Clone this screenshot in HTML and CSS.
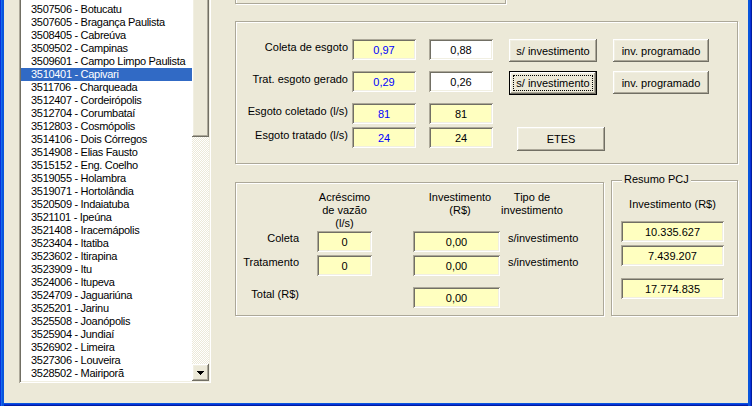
FILE: index.html
```html
<!DOCTYPE html>
<html lang="pt-BR">
<head>
<meta charset="utf-8">
<title>Resumo PCJ</title>
<link rel="stylesheet" href="styles.css">
</head>
<body>
<div class="frame">
  <div class="listbox sunken">
    <div class="items">
      <div class="item">3507100 - Bom Jesus dos Perdões</div>
      <div class="item">3507506 - Botucatu</div>
      <div class="item">3507605 - Bragança Paulista</div>
      <div class="item">3508405 - Cabreúva</div>
      <div class="item">3509502 - Campinas</div>
      <div class="item">3509601 - Campo Limpo Paulista</div>
      <div class="item sel">3510401 - Capivari</div>
      <div class="item">3511706 - Charqueada</div>
      <div class="item">3512407 - Cordeirópolis</div>
      <div class="item">3512704 - Corumbataí</div>
      <div class="item">3512803 - Cosmópolis</div>
      <div class="item">3514106 - Dois Córregos</div>
      <div class="item">3514908 - Elias Fausto</div>
      <div class="item">3515152 - Eng. Coelho</div>
      <div class="item">3519055 - Holambra</div>
      <div class="item">3519071 - Hortolândia</div>
      <div class="item">3520509 - Indaiatuba</div>
      <div class="item">3521101 - Ipeúna</div>
      <div class="item">3521408 - Iracemápolis</div>
      <div class="item">3523404 - Itatiba</div>
      <div class="item">3523602 - Itirapina</div>
      <div class="item">3523909 - Itu</div>
      <div class="item">3524006 - Itupeva</div>
      <div class="item">3524709 - Jaguariúna</div>
      <div class="item">3525201 - Jarinu</div>
      <div class="item">3525508 - Joanópolis</div>
      <div class="item">3525904 - Jundiaí</div>
      <div class="item">3526902 - Limeira</div>
      <div class="item">3527306 - Louveira</div>
      <div class="item">3528502 - Mairiporã</div>
    </div>
    <div class="vscroll">
      <div class="thumb raised"></div>
      <div class="track"></div>
      <div class="sbtn raised">
        <svg class="arrow" width="7" height="4" viewBox="0 0 7 4"><path d="M0 0h7v1h-1v1h-1v1h-1v1h-1v-1h-1v-1h-1v-1h-1z" fill="#000"/></svg>
      </div>
    </div>
  </div>

  <div class="right">
    <div class="group gtop"></div>

    <div class="group g2">
      <div class="lbl r1">Coleta de esgoto</div>
      <div class="tb blue c2 r1">0,97</div>
      <div class="tb white c4 r1">0,88</div>
      <div class="btn raised c6 r1">s/ investimento</div>
      <div class="btn raised c8 r1">inv. programado</div>

      <div class="lbl r2">Trat. esgoto gerado</div>
      <div class="tb blue c2 r2">0,29</div>
      <div class="tb white c4 r2">0,26</div>
      <div class="btn default c6 r2"><span class="focus">s/ investimento</span></div>
      <div class="btn raised c8 r2">inv. programado</div>

      <div class="lbl r3">Esgoto coletado (l/s)</div>
      <div class="tb blue c2 r3">81</div>
      <div class="tb c4 r3">81</div>

      <div class="lbl r4">Esgoto tratado (l/s)</div>
      <div class="tb blue c2 r4">24</div>
      <div class="tb c4 r4">24</div>
      <div class="btn raised etes r4">ETES</div>
    </div>

    <div class="bottomrow">
      <div class="group g3">
        <div class="hdr h2">Acréscimo<br>de vazão<br>(l/s)</div>
        <div class="hdr h4">Investimento<br>(R$)</div>
        <div class="hdr h5">Tipo de<br>investimento</div>

        <div class="lbl3 q2">Coleta</div>
        <div class="tb q2 k2">0</div>
        <div class="tb q2 k4">0,00</div>
        <div class="tipo q2">s/investimento</div>

        <div class="lbl3 q3">Tratamento</div>
        <div class="tb q3 k2">0</div>
        <div class="tb q3 k4">0,00</div>
        <div class="tipo q3">s/investimento</div>

        <div class="lbl3 q4">Total (R$)</div>
        <div class="tb q4 k4">0,00</div>
      </div>

      <div class="group resumo">
        <span class="legend">Resumo PCJ</span>
        <div class="rlabel">Investimento (R$)</div>
        <div class="tb rbox rb1">10.335.627</div>
        <div class="tb rbox rb2">7.439.207</div>
        <div class="tb rbox rb3">17.774.835</div>
      </div>
    </div>
  </div>
</div>
</body>
</html>
```
FILE: styles.css
```css
* { box-sizing: border-box; }
html, body { margin: 0; padding: 0; }
body {
  width: 752px;
  height: 406px;
  overflow: hidden;
  background: #ECE9D8;
  font-family: "Liberation Sans", Arial, sans-serif;
  font-size: 11px;
  color: #000;
}

.frame {
  display: flex;
  align-items: flex-start;
  width: 752px;
  height: 406px;
  padding: 0 4px 3px 4px;
  overflow: hidden;
  background: #ECE9D8;
  box-shadow:
    inset 1px 0 #0831D9,
    inset 2px 0 #166AEE,
    inset 4px 0 #0855DD,
    inset -1px 0 #001EA0,
    inset -2px 0 #0831D9,
    inset -4px 0 #0855DD,
    inset 0 -1px #001EA0,
    inset 0 -2px #0831D9,
    inset 0 -3px #0855DD;
}

/* bevels */
.raised {
  background: #ECE9D8;
  box-shadow:
    inset -1px -1px #716F64,
    inset 1px 1px #FFFFFF,
    inset -2px -2px #ACA899,
    inset 2px 2px #F1EFE2;
}
.sunken {
  box-shadow:
    inset 1px 1px #ACA899,
    inset -1px -1px #FFFFFF,
    inset 2px 2px #716F64,
    inset -2px -2px #F1EFE2;
}

/* list box */
.listbox {
  flex: none;
  display: flex;
  margin-left: 15px;
  margin-top: -12px;
  width: 192px;
  height: 395px;
  padding: 2px;
  background: #FFFFFF;
}
.items {
  width: 171px;
  height: 100%;
  overflow: hidden;
}
.item {
  height: 13px;
  line-height: 13px;
  padding-left: 10px;
  white-space: nowrap;
  letter-spacing: -0.3px;
}
.item.sel {
  background: #316AC5;
  color: #FFFFFF;
}
.vscroll {
  width: 17px;
  height: 100%;
  display: flex;
  flex-direction: column;
}
.thumb { height: 147px; flex: none; }
.track {
  flex: 1;
  background-color: #ECE9D8;
  background-image: conic-gradient(#FFFFFF 25%, #ECE9D8 0 50%, #FFFFFF 0 75%, #ECE9D8 0);
  background-size: 2px 2px;
}
.sbtn {
  height: 17px;
  flex: none;
  display: flex;
  align-items: center;
  justify-content: center;
}
.arrow { display: block; shape-rendering: crispEdges; }

/* right side */
.right {
  flex: none;
  display: flex;
  flex-direction: column;
  margin-left: 24px;
  width: 504px;
}
.group {
  border: 1px solid #ACA899;
  box-shadow: inset 1px 1px #FFFFFF, 1px 1px #FFFFFF;
}
.gtop {
  width: 271px;
  height: 30px;
  margin-top: -26px;
}

.g2 {
  margin-top: 17px;
  width: 503px;
  height: 143px;
  padding-top: 17px;
  display: grid;
  grid-template-columns: 116px 64px 13px 64px 16px 88px 16px 96px;
  grid-template-rows: 32px 32px 24px 24px;
  align-items: start;
}
.r1 { grid-row: 1; }
.r2 { grid-row: 2; }
.r3 { grid-row: 3; }
.r4 { grid-row: 4; }
.c2 { grid-column: 2; }
.c4 { grid-column: 4; }
.c6 { grid-column: 6; }
.c8 { grid-column: 8; }
.lbl {
  grid-column: 1;
  text-align: right;
  padding-right: 4px;
  padding-top: 2px;
  line-height: 13px;
  white-space: nowrap;
}

.tb {
  height: 21px;
  display: flex;
  align-items: center;
  justify-content: center;
  padding-top: 1px;
  background: #FFFFC0;
  white-space: nowrap;
  box-shadow:
    inset 1px 1px #ACA899,
    inset -1px -1px #FFFFFF,
    inset 2px 2px #716F64,
    inset -2px -2px #F1EFE2;
}
.tb.white { background: #FFFFFF; }
.tb.blue { color: #0000FF; }

.btn {
  height: 23px;
  display: flex;
  align-items: center;
  justify-content: center;
  white-space: nowrap;
}
.btn.default {
  height: 24px;
  padding: 4px;
  background: #ECE9D8;
  box-shadow:
    inset 0 0 0 1px #000000,
    inset -2px -2px #716F64,
    inset 2px 2px #FFFFFF,
    inset -3px -3px #ACA899,
    inset 3px 3px #F1EFE2;
}
.focus {
  flex: 1;
  align-self: stretch;
  display: flex;
  align-items: center;
  justify-content: center;
  border: 1px dotted #000000;
}
.btn.etes {
  grid-column: 6 / 9;
  width: 88px;
  height: 24px;
  margin-left: 8px;
}

/* bottom row */
.bottomrow {
  display: flex;
  align-items: flex-end;
  gap: 7px;
  margin-top: 16px;
}
.g3 {
  width: 369px;
  height: 134px;
  padding-top: 8px;
  display: grid;
  grid-template-columns: 81px 55px 41px 87px 100px;
  grid-template-rows: 40px 24px 32px 21px;
  align-items: start;
}
.hdr {
  grid-row: 1;
  line-height: 13px;
  text-align: center;
  white-space: nowrap;
}
.h2 { grid-column: 2; justify-self: center; }
.h4 { grid-column: 4; padding-left: 7px; }
.h5 { grid-column: 5; width: 62px; margin-left: 1px; }
.q2 { grid-row: 2; }
.q3 { grid-row: 3; }
.q4 { grid-row: 4; }
.k2 { grid-column: 2; }
.k4 { grid-column: 4; }
.lbl3 {
  grid-column: 1;
  text-align: right;
  padding-right: 18px;
  padding-top: 1px;
  line-height: 13px;
  white-space: nowrap;
}
.tipo {
  grid-column: 5;
  padding-left: 8px;
  padding-top: 1px;
  line-height: 13px;
  white-space: nowrap;
}

.resumo {
  position: relative;
  width: 127px;
  height: 136px;
  padding: 17px 0 0 9px;
  display: flex;
  flex-direction: column;
  align-items: flex-start;
}
.legend {
  position: absolute;
  top: -8px;
  left: 10px;
  padding: 0 2px;
  line-height: 13px;
  background: #ECE9D8;
}
.rlabel {
  width: 103px;
  text-align: center;
  line-height: 13px;
}
.rbox { width: 103px; }
.rb1 { margin-top: 10px; }
.rb2 { margin-top: 3px; }
.rb3 { margin-top: 12px; }
```
